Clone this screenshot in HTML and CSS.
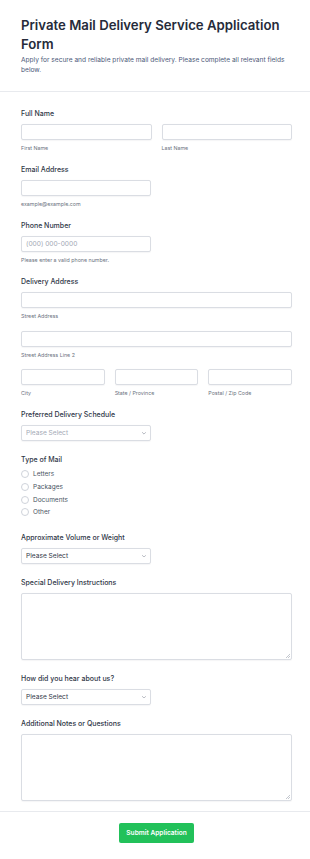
FILE: index.html
```html
<!DOCTYPE html>
<html lang="en">
<head>
<meta charset="utf-8">
<title>Private Mail Delivery Service Application Form</title>
<link rel="stylesheet" href="styles.css">
</head>
<body>
<form class="form">
  <header class="form-header">
    <h1 class="form-title">Private Mail Delivery Service Application Form</h1>
    <p class="form-subtitle">Apply for secure and reliable private mail delivery. Please complete all relevant fields below.</p>
  </header>

  <div class="form-body">
    <div class="field">
      <label class="label">Full Name</label>
      <div class="row row-2">
        <div class="cell">
          <input class="input" type="text">
          <span class="sublabel">First Name</span>
        </div>
        <div class="cell">
          <input class="input" type="text">
          <span class="sublabel">Last Name</span>
        </div>
      </div>
    </div>

    <div class="field">
      <label class="label">Email Address</label>
      <div class="half">
        <input class="input" type="email">
        <span class="sublabel">example@example.com</span>
      </div>
    </div>

    <div class="field">
      <label class="label">Phone Number</label>
      <div class="half">
        <input class="input" type="tel" placeholder="(000) 000-0000">
        <span class="sublabel">Please enter a valid phone number.</span>
      </div>
    </div>

    <div class="field">
      <label class="label">Delivery Address</label>
      <div class="stack">
        <div class="cell">
          <input class="input" type="text">
          <span class="sublabel">Street Address</span>
        </div>
        <div class="cell">
          <input class="input" type="text">
          <span class="sublabel">Street Address Line 2</span>
        </div>
        <div class="row row-3">
          <div class="cell">
            <input class="input" type="text">
            <span class="sublabel">City</span>
          </div>
          <div class="cell">
            <input class="input" type="text">
            <span class="sublabel">State / Province</span>
          </div>
          <div class="cell">
            <input class="input" type="text">
            <span class="sublabel">Postal / Zip Code</span>
          </div>
        </div>
      </div>
    </div>

    <div class="field">
      <label class="label">Preferred Delivery Schedule</label>
      <div class="select-wrap half">
        <select class="input select is-placeholder">
          <option>Please Select</option>
        </select>
        <svg class="chevron" viewBox="0 0 10 6" aria-hidden="true"><path d="M1 1l4 4 4-4" fill="none" stroke="currentColor" stroke-width="1.6" stroke-linecap="round" stroke-linejoin="round"/></svg>
      </div>
    </div>

    <div class="field">
      <label class="label">Type of Mail</label>
      <div class="radios">
        <label class="radio"><span class="radio-dot"></span>Letters</label>
        <label class="radio"><span class="radio-dot"></span>Packages</label>
        <label class="radio"><span class="radio-dot"></span>Documents</label>
        <label class="radio"><span class="radio-dot"></span>Other</label>
      </div>
    </div>

    <div class="field">
      <label class="label">Approximate Volume or Weight</label>
      <div class="select-wrap half">
        <select class="input select">
          <option>Please Select</option>
        </select>
        <svg class="chevron" viewBox="0 0 10 6" aria-hidden="true"><path d="M1 1l4 4 4-4" fill="none" stroke="currentColor" stroke-width="1.6" stroke-linecap="round" stroke-linejoin="round"/></svg>
      </div>
    </div>

    <div class="field">
      <label class="label">Special Delivery Instructions</label>
      <textarea class="input textarea"></textarea>
    </div>

    <div class="field">
      <label class="label">How did you hear about us?</label>
      <div class="select-wrap half">
        <select class="input select">
          <option>Please Select</option>
        </select>
        <svg class="chevron" viewBox="0 0 10 6" aria-hidden="true"><path d="M1 1l4 4 4-4" fill="none" stroke="currentColor" stroke-width="1.6" stroke-linecap="round" stroke-linejoin="round"/></svg>
      </div>
    </div>

    <div class="field">
      <label class="label">Additional Notes or Questions</label>
      <textarea class="input textarea"></textarea>
    </div>
  </div>

  <footer class="form-footer">
    <button class="submit" type="submit">Submit Application</button>
  </footer>
</form>
</body>
</html>
```

FILE: styles.css
```css
* {
  box-sizing: border-box;
}

html, body {
  margin: 0;
  padding: 0;
  background: #ffffff;
}

body {
  font-family: Inter, "Noto Sans", "Liberation Sans", sans-serif;
  color: #334155;
}

.form {
  margin: 0;
}

.form-header {
  padding: 16px 18px 16px 21px;
  border-bottom: 1px solid #e8eaee;
}

.form-title {
  margin: 0;
  font-size: 13.2px;
  line-height: 19px;
  font-weight: 600;
  color: #262b3a;
}

.form-subtitle {
  margin: 2px 0 0;
  font-size: 6.6px;
  line-height: 9.5px;
  color: #4b5878;
}

.form-body {
  display: flex;
  flex-direction: column;
  gap: 14px;
  padding: 17px 18px 10px 21px;
}

.field {
  display: flex;
  flex-direction: column;
}

.label {
  display: block;
  font-size: 7px;
  line-height: 10px;
  font-weight: 500;
  color: #2f3747;
  margin-bottom: 5px;
}

.row {
  display: grid;
  gap: 10px;
}

.row-2 {
  grid-template-columns: 1fr 1fr;
}

.row-3 {
  grid-template-columns: 1fr 1fr 1fr;
}

.stack {
  display: flex;
  flex-direction: column;
  gap: 11.5px;
}

.cell {
  display: flex;
  flex-direction: column;
}

.half {
  width: 130px;
  display: flex;
  flex-direction: column;
}

.input {
  display: block;
  width: 100%;
  height: 16px;
  margin: 0;
  padding: 0 4px;
  border: 1px solid #dadde3;
  border-radius: 2px;
  background: #ffffff;
  font-family: inherit;
  font-size: 6.6px;
  color: #2f3747;
  outline: none;
  box-shadow: 0 0.5px 1px rgba(15, 23, 42, 0.04);
}

.input::placeholder {
  color: #a3a9b5;
}

.sublabel {
  display: block;
  margin-top: 5px;
  font-size: 5.3px;
  line-height: 6px;
  color: #6b7280;
}

.select-wrap {
  position: relative;
}

.select {
  appearance: none;
  -webkit-appearance: none;
  padding-right: 14px;
  color: #2f3747;
}

.select.is-placeholder {
  color: #a3a9b5;
}

.chevron {
  position: absolute;
  right: 5.5px;
  top: 7px;
  width: 4px;
  height: 2.6px;
  color: #8a909c;
  pointer-events: none;
}

.radios {
  display: flex;
  flex-direction: column;
  margin-top: -2.4px;
}

.radio {
  display: flex;
  align-items: center;
  gap: 4px;
  height: 12.8px;
  font-size: 6.5px;
  color: #4b5563;
}

.radio-dot {
  flex: none;
  width: 8px;
  height: 8px;
  border: 1px solid #cfd3da;
  border-radius: 50%;
  background: #ffffff;
}

.textarea {
  height: 67px;
  padding: 4px;
  resize: vertical;
}

.textarea::-webkit-resizer {
  background: linear-gradient(135deg, transparent 0 45%, #c4c8cf 45% 58%, transparent 58% 72%, #c4c8cf 72% 85%, transparent 85%) no-repeat right 1px bottom 1px / 4px 4px;
}

.form-footer {
  display: flex;
  justify-content: center;
  padding: 11.5px 18px 16px 21px;
  border-top: 1px solid #e8eaee;
}

.submit {
  height: 19.6px;
  width: 75px;
  padding: 0;
  border: none;
  border-radius: 2px;
  background: #22c15a;
  color: #ffffff;
  font-family: inherit;
  font-size: 6.6px;
  font-weight: 600;
  cursor: pointer;
}
```
